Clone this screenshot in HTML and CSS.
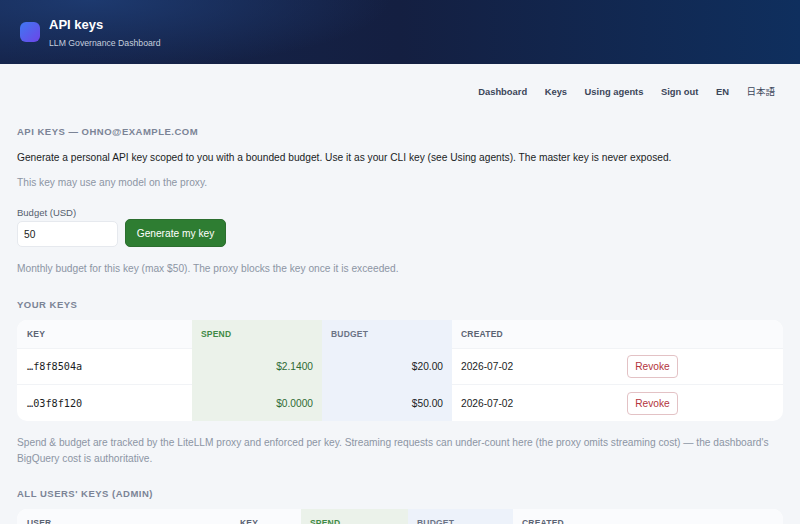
FILE: index.html
```html
<!DOCTYPE html>
<html lang="en">
<head>
    <meta charset="UTF-8">
    <meta name="viewport" content="width=device-width, initial-scale=1.0">
    <title>API keys</title>
    <link rel="stylesheet" href="styles.css">
</head>
<body>
    <header class="topbar">
        <div class="logo"></div>
        <div>
            <h1>API keys</h1>
            <div class="subtitle">LLM Governance Dashboard</div>
        </div>
    </header>

    <nav class="nav">
        <a href="#">Dashboard</a>
        <a href="#">Keys</a>
        <a href="#">Using agents</a>
        <a href="#">Sign out</a>
        <a href="#">EN</a>
        <a href="#" class="lang">日本語</a>
    </nav>

    <main class="content">
        <h2 class="section-title first">API keys — ohno@example.com</h2>
        <p class="intro">Generate a personal API key scoped to you with a bounded budget. Use it as your CLI key (see Using agents). The master key is never exposed.</p>
        <p class="muted scope">This key may use any model on the proxy.</p>

        <label class="field-label" for="budget">Budget (USD)</label>
        <div class="form-row">
            <input class="budget-input" id="budget" type="text" value="50">
            <button class="generate-btn">Generate my key</button>
        </div>
        <p class="muted hint">Monthly budget for this key (max $50). The proxy blocks the key once it is exceeded.</p>

        <h2 class="section-title">Your keys</h2>
        <table class="keys">
            <colgroup>
                <col class="c-key"><col class="c-spend"><col class="c-budget"><col class="c-created"><col>
            </colgroup>
            <thead>
                <tr>
                    <th>Key</th>
                    <th class="spend">Spend</th>
                    <th class="budget">Budget</th>
                    <th>Created</th>
                    <th></th>
                </tr>
            </thead>
            <tbody>
                <tr>
                    <td class="mono">…f8f8504a</td>
                    <td class="spend num">$2.1400</td>
                    <td class="budget num">$20.00</td>
                    <td>2026-07-02</td>
                    <td class="action"><button class="revoke-btn">Revoke</button></td>
                </tr>
                <tr>
                    <td class="mono">…03f8f120</td>
                    <td class="spend num">$0.0000</td>
                    <td class="budget num">$50.00</td>
                    <td>2026-07-02</td>
                    <td class="action"><button class="revoke-btn">Revoke</button></td>
                </tr>
            </tbody>
        </table>
        <p class="muted note">Spend &amp; budget are tracked by the LiteLLM proxy and enforced per key. Streaming requests can under-count here (the proxy omits streaming cost) — the dashboard's BigQuery cost is authoritative.</p>

        <h2 class="section-title">All users' keys (admin)</h2>
        <table class="keys admin">
            <colgroup>
                <col class="c-user"><col class="c-akey"><col class="c-aspend"><col class="c-abudget"><col>
            </colgroup>
            <thead>
                <tr>
                    <th>User</th>
                    <th>Key</th>
                    <th class="spend">Spend</th>
                    <th class="budget">Budget</th>
                    <th>Created</th>
                </tr>
            </thead>
        </table>
    </main>
</body>
</html>
```

FILE: styles.css
```css
* {
    box-sizing: border-box;
}
body {
    margin: 0;
    background: #f4f6f9;
    color: #1a1d24;
    font-family: "Liberation Sans", Arial, "Noto Sans CJK JP", sans-serif;
    font-size: 10.2px;
}
.topbar {
    height: 64px;
    padding: 0 20px;
    display: flex;
    align-items: center;
    gap: 9px;
    color: white;
    background: radial-gradient(ellipse 300px 70px at 90px 0, rgba(30,60,115,0.9), rgba(30,60,115,0)), linear-gradient(90deg, #15244b 0%, #141f41 50%, #0f2f5e 100%);
}
.logo {
    width: 20px;
    height: 20px;
    border-radius: 6px;
    background: linear-gradient(135deg, #3f78f2, #6d45e8);
}
.topbar h1 {
    margin: 1px 0 6px;
    font-size: 13px;
    line-height: 15px;
    font-weight: bold;
}
.subtitle {
    font-size: 8.7px;
    line-height: 11px;
    color: #c6cfde;
}
.nav {
    display: flex;
    justify-content: flex-end;
    gap: 17.5px;
    padding: 21px 25px 0 17px;
    height: 62px;
}
.nav a {
    color: #3c4659;
    font-size: 9.4px;
    line-height: 13px;
    font-weight: bold;
    text-decoration: none;
}
.nav a.lang {
    font-size: 9.5px;
    font-weight: normal;
}
.content {
    padding: 0 17px;
}
.section-title {
    margin: 0;
    font-size: 9.5px;
    line-height: 12px;
    font-weight: bold;
    letter-spacing: 0.5px;
    text-transform: uppercase;
    color: #7b8496;
}
.intro {
    margin: 13px 0 0;
    line-height: 14px;
}
.muted {
    color: #8c95a4;
    line-height: 14px;
}
.scope {
    margin: 11px 0 0;
}
.field-label {
    display: block;
    margin-top: 17px;
    font-size: 9.5px;
    line-height: 12px;
    color: #555e6e;
}
.form-row {
    display: flex;
    align-items: flex-end;
    gap: 7px;
}
.budget-input {
    width: 101px;
    height: 26px;
    padding: 0 6px;
    border: 1px solid #e6e9ee;
    border-radius: 5px;
    background: white;
    color: #1a1d24;
    font: inherit;
}
.generate-btn {
    width: 101px;
    height: 28px;
    border: 1px solid #2c6e2f;
    border-radius: 5px;
    background: #2e7d32;
    color: white;
    font: inherit;
}
.hint {
    margin: 15px 0 0;
}
.hint + .section-title {
    margin-top: 23px;
}
.keys {
    width: 766px;
    margin-top: 9px;
    border-collapse: separate;
    border-spacing: 0;
    table-layout: fixed;
    background: white;
    border-radius: 10px;
    overflow: hidden;
}
.c-key { width: 175px; }
.c-spend { width: 130px; }
.c-budget { width: 130px; }
.c-created { width: 175px; }
.c-user { width: 214px; }
.c-akey { width: 70px; }
.c-aspend { width: 107px; }
.c-abudget { width: 105px; }
th {
    height: 29px;
    padding: 0 9px;
    text-align: left;
    font-size: 8.5px;
    letter-spacing: 0.2px;
    text-transform: uppercase;
    color: #5b6373;
    background: #fafbfd;
    border-bottom: 1px solid #f1f3f6;
}
td {
    height: 36px;
    padding: 0 9px;
    border-bottom: 1px solid #f1f3f6;
}
th:first-child,
td:first-child {
    padding-left: 10px;
}
tbody tr:last-child td {
    border-bottom: none;
}
.mono {
    font-family: "DejaVu Sans Mono", "Liberation Mono", monospace;
    font-size: 10.2px;
}
.num {
    text-align: right;
}
th.spend {
    color: #3f8a46;
}
.spend {
    background: #ebf2ea;
    border-bottom-color: #ebf2ea;
}
td.spend {
    color: #2e6b34;
}
.budget {
    background: #edf2fa;
    border-bottom-color: #edf2fa;
}
th.budget {
    color: #6b7385;
}
td.action {
    padding: 0;
}
.revoke-btn {
    width: 51px;
    height: 23px;
    padding: 0;
    border: 1px solid #e3c2c5;
    border-radius: 4px;
    background: white;
    color: #b3343c;
    font: inherit;
}
.note {
    margin: 14px 0 0;
    line-height: 16px;
}
.note + .section-title {
    margin-top: 21px;
}
```
